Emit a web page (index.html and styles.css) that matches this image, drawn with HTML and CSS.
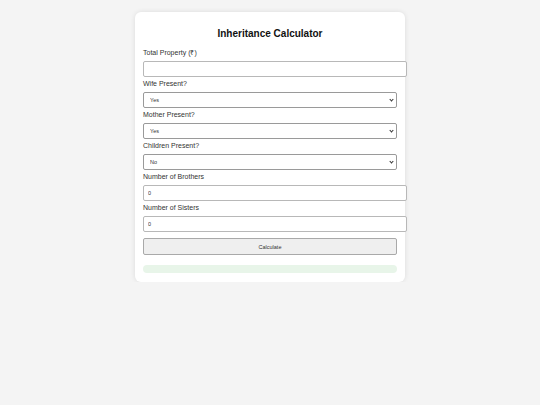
FILE: index.html
```html
<!DOCTYPE html>
<html lang="en">
<head>
<meta charset="utf-8">
<title>Inheritance Calculator</title>
<link rel="stylesheet" href="styles.css">
</head>
<body>
<div class="card">
  <h2 class="title">Inheritance Calculator</h2>
  <label class="lbl" for="prop">Total Property (₹)</label>
  <input class="field" id="prop" type="number">
  <label class="lbl" for="wife">Wife Present?</label>
  <div class="sel"><select class="choice" id="wife"><option>Yes</option><option>No</option></select></div>
  <label class="lbl" for="mother">Mother Present?</label>
  <div class="sel"><select class="choice" id="mother"><option>Yes</option><option>No</option></select></div>
  <label class="lbl" for="children">Children Present?</label>
  <div class="sel"><select class="choice" id="children"><option>No</option><option>Yes</option></select></div>
  <label class="lbl" for="brothers">Number of Brothers</label>
  <input class="field" id="brothers" type="number" value="0">
  <label class="lbl" for="sisters">Number of Sisters</label>
  <input class="field" id="sisters" type="number" value="0">
  <button class="btn" type="button">Calculate</button>
  <div class="result"></div>
</div>
</body>
</html>
```
FILE: styles.css
```css
html, body {
  margin: 0;
  padding: 0;
}
body {
  background: #f4f4f4;
  font-family: "Liberation Sans", Arial, sans-serif;
  color: #222;
}
.card {
  width: 254px;
  margin: 12px auto 0;
  padding: 8px 8px 9px;
  background: #fff;
  border-radius: 6px;
  box-shadow: 0 0 5px rgba(0, 0, 0, 0.1);
}
.title {
  margin: 8px 0 9px;
  font-size: 10px;
  line-height: 12px;
  font-weight: bold;
  text-align: center;
  color: #111;
}
.lbl {
  display: block;
  margin: 3px 0 4px;
  font-size: 7px;
  line-height: 8px;
  color: #333;
}
.field {
  display: block;
  box-sizing: content-box;
  width: 100%;
  height: 14px;
  margin: 0;
  padding: 0 4px;
  border: 1px solid #b8b8b8;
  border-radius: 2px;
  font-family: "Liberation Sans", Arial, sans-serif;
  font-size: 5.5px;
  color: #333;
  background: #fff;
  outline: none;
  -moz-appearance: textfield;
}
.field::-webkit-inner-spin-button,
.field::-webkit-outer-spin-button {
  -webkit-appearance: none;
  margin: 0;
}
.sel {
  position: relative;
}
.sel::after {
  content: "";
  position: absolute;
  right: 4px;
  top: 5.5px;
  width: 2px;
  height: 2px;
  border-right: 1.2px solid #333;
  border-bottom: 1.2px solid #333;
  transform: rotate(45deg);
  pointer-events: none;
}
.choice {
  display: block;
  box-sizing: border-box;
  width: 100%;
  height: 16px;
  margin: 0;
  padding: 0 6px;
  border: 1px solid #9a9a9a;
  border-radius: 2px;
  font-family: "Liberation Sans", Arial, sans-serif;
  font-size: 5.5px;
  color: #333;
  background: #fff;
  -webkit-appearance: none;
  appearance: none;
}
.btn {
  display: block;
  box-sizing: border-box;
  width: 100%;
  height: 17px;
  margin: 6px 0 0;
  padding: 0;
  border: 1px solid #a9a9a9;
  border-radius: 2px;
  background: #efefef;
  font-family: "Liberation Sans", Arial, sans-serif;
  font-size: 5.5px;
  color: #333;
}
.result {
  margin-top: 10px;
  height: 8px;
  background: #e8f5e9;
  border-radius: 4px;
}
```
